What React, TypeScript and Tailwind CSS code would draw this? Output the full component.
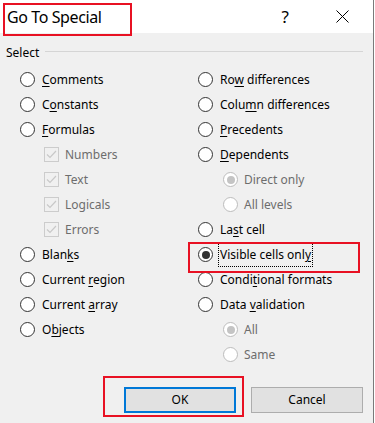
import React from "react";

const font = { fontFamily: '"Noto Sans", "Open Sans", sans-serif' };

function U({ t, i }: { t: string; i: number }) {
  if (i < 0) return <>{t}</>;
  return (
    <>
      {t.slice(0, i)}
      <span className="underline underline-offset-2">{t[i]}</span>
      {t.slice(i + 1)}
    </>
  );
}

function Radio({ checked, disabled }: { checked?: boolean; disabled?: boolean }) {
  const border = disabled ? "border-[#bcbcbc]" : "border-[#333333]";
  return (
    <span
      className={`flex h-[15px] w-[15px] shrink-0 items-center justify-center rounded-full border-[1.5px] bg-white ${border}`}
    >
      {checked && (
        <span
          className={`h-[8px] w-[8px] rounded-full ${disabled ? "bg-[#c4c4c4]" : "bg-[#333333]"}`}
        />
      )}
    </span>
  );
}

function Check() {
  return (
    <span className="flex h-[15px] w-[15px] shrink-0 items-center justify-center border border-[#cccccc] bg-[#f0f0f0]">
      <svg width="11" height="9" viewBox="0 0 11 9" fill="none">
        <path d="M1 4.5 L4 7.5 L10 1" stroke="#c8c8c8" strokeWidth="1.2" />
      </svg>
    </span>
  );
}

type Item = {
  label: string;
  u: number;
  kind: "radio" | "check" | "subradio";
  checked?: boolean;
  focus?: boolean;
};

const left: Item[] = [
  { label: "Comments", u: 0, kind: "radio" },
  { label: "Constants", u: 1, kind: "radio" },
  { label: "Formulas", u: 0, kind: "radio" },
  { label: "Numbers", u: -1, kind: "check" },
  { label: "Text", u: -1, kind: "check" },
  { label: "Logicals", u: -1, kind: "check" },
  { label: "Errors", u: -1, kind: "check" },
  { label: "Blanks", u: 4, kind: "radio" },
  { label: "Current region", u: 8, kind: "radio" },
  { label: "Current array", u: 8, kind: "radio" },
  { label: "Objects", u: 1, kind: "radio" },
];

const right: Item[] = [
  { label: "Row differences", u: 2, kind: "radio" },
  { label: "Column differences", u: 4, kind: "radio" },
  { label: "Precedents", u: 0, kind: "radio" },
  { label: "Dependents", u: 0, kind: "radio" },
  { label: "Direct only", u: -1, kind: "subradio", checked: true },
  { label: "All levels", u: -1, kind: "subradio" },
  { label: "Last cell", u: 2, kind: "radio" },
  { label: "Visible cells only", u: 17, kind: "radio", checked: true, focus: true },
  { label: "Conditional formats", u: 5, kind: "radio" },
  { label: "Data validation", u: 5, kind: "radio" },
  { label: "All", u: -1, kind: "subradio", checked: true },
  { label: "Same", u: -1, kind: "subradio" },
];

function Row({ it }: { it: Item }) {
  if (it.kind === "check") {
    return (
      <div className="flex h-[25px] items-center pl-[24px] gap-[6px]">
        <Check />
        <span className="text-[#6d6d6d]">{it.label}</span>
      </div>
    );
  }
  if (it.kind === "subradio") {
    return (
      <div className="flex h-[25px] items-center pl-[25px] gap-[6px]">
        <Radio disabled checked={it.checked} />
        <span className="text-[#6d6d6d]">{it.label}</span>
      </div>
    );
  }
  return (
    <div className="flex h-[25px] items-center gap-[7px]">
      <Radio checked={it.checked} />
      <span
        className={
          it.focus
            ? "-ml-[2px] border border-dotted border-black px-[1px] leading-[23px]"
            : ""
        }
      >
        <U t={it.label} i={it.u} />
      </span>
    </div>
  );
}

export default function App() {
  return (
    <div className="relative flex h-[423px] w-[375px] overflow-hidden bg-white text-[12px] text-black" style={font}>
      <div className="flex w-[373px] flex-col">
        {/* title bar */}
        <div className="flex h-[33px] items-center bg-white">
          <span className="pl-[7px] pt-[1px] text-[16px] leading-none tracking-[-0.4px]">Go To Special</span>
          <span className="ml-auto mr-[47px] text-[17px] leading-none">?</span>
          <svg className="mr-[24px]" width="13" height="13" viewBox="0 0 13 13">
            <path d="M0.5 0.5 L12.5 12.5 M12.5 0.5 L0.5 12.5" stroke="#000" strokeWidth="1" />
          </svg>
        </div>
        {/* body */}
        <div className="flex flex-1 flex-col bg-[#f0f0f0]">
          <div className="mt-[14px] flex items-center pl-[6px] pr-[10px]">
            <span className="leading-none">Select</span>
            <span className="ml-[6px] -mt-[3px] h-px flex-1 bg-[#d5d5d5]" />
          </div>
          <div className="mt-[8px] flex">
            <div className="flex w-[180px] flex-col pl-[20px]">
              {left.map((it) => (
                <Row key={it.label} it={it} />
              ))}
            </div>
            <div className="flex flex-1 flex-col pl-[18px]">
              {right.map((it) => (
                <Row key={it.label} it={it} />
              ))}
            </div>
          </div>
          <div className="mt-[20px] flex gap-[15px] pl-[124px]">
            <button className="h-[26px] w-[112px] border-2 border-[#0078d7] bg-[#e1e1e1] text-[12px]">
              OK
            </button>
            <button className="h-[26px] w-[112px] border border-[#adadad] bg-[#e1e1e1] text-[12px]">
              Cancel
            </button>
          </div>
        </div>
      </div>
      <div className="w-px bg-[#7a7a7a]" />
      <div className="w-px bg-white" />

      {/* annotation boxes */}
      <div className="pointer-events-none absolute left-[3px] top-[3px] h-[33px] w-[129px] border-2 border-[#e81123]" />
      <div className="pointer-events-none absolute left-[188px] top-[242px] h-[31px] w-[172px] border-2 border-[#e81123]" />
      <div className="pointer-events-none absolute left-[103px] top-[376px] h-[41px] w-[141px] border-2 border-[#e81123]" />
    </div>
  );
}
